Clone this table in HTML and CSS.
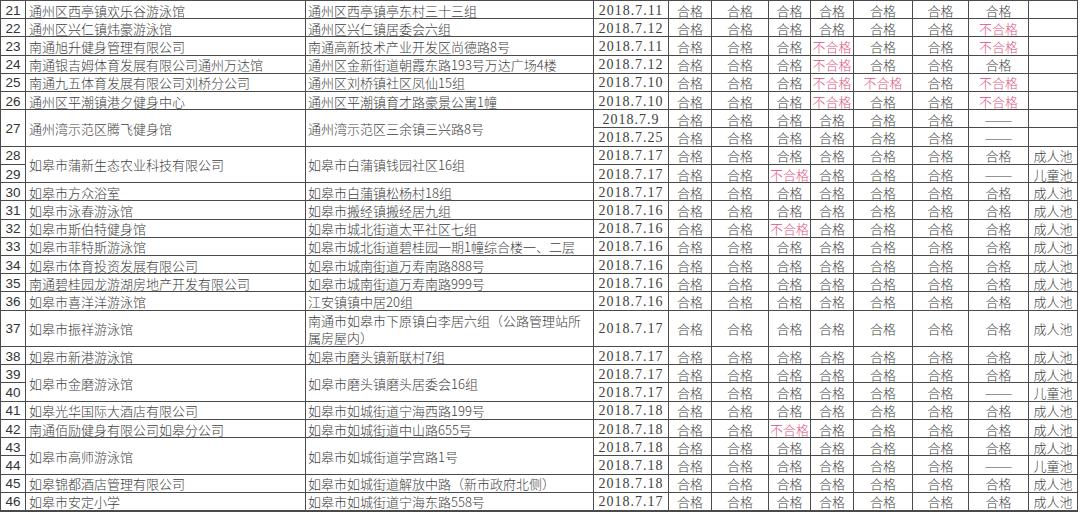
FILE: index.html
```html
<!DOCTYPE html>
<html lang="zh-CN">
<head>
<meta charset="utf-8">
<title>游泳场所检测结果</title>
<link rel="stylesheet" href="styles.css">
</head>
<body>
<div class="sheet">
  <!-- 21 -->
  <div class="c n">21</div><div class="c l">通州区西亭镇欢乐谷游泳馆</div><div class="c a">通州区西亭镇亭东村三十三组</div><div class="c d">2018.7.11</div>
  <div class="c">合格</div><div class="c">合格</div><div class="c">合格</div><div class="c">合格</div><div class="c">合格</div><div class="c">合格</div><div class="c">合格</div><div class="c"></div>
  <!-- 22 -->
  <div class="c n">22</div><div class="c l">通州区兴仁镇炜豪游泳馆</div><div class="c a">通州区兴仁镇居委会六组</div><div class="c d">2018.7.12</div>
  <div class="c">合格</div><div class="c">合格</div><div class="c">合格</div><div class="c">合格</div><div class="c">合格</div><div class="c">合格</div><div class="c bad">不合格</div><div class="c"></div>
  <!-- 23 -->
  <div class="c n">23</div><div class="c l">南通旭升健身管理有限公司</div><div class="c a">南通高新技术产业开发区尚德路8号</div><div class="c d">2018.7.11</div>
  <div class="c">合格</div><div class="c">合格</div><div class="c">合格</div><div class="c bad">不合格</div><div class="c">合格</div><div class="c">合格</div><div class="c bad">不合格</div><div class="c"></div>
  <!-- 24 -->
  <div class="c n">24</div><div class="c l">南通银吉姆体育发展有限公司通州万达馆</div><div class="c a">通州区金新街道朝霞东路193号万达广场4楼</div><div class="c d">2018.7.12</div>
  <div class="c">合格</div><div class="c">合格</div><div class="c">合格</div><div class="c bad">不合格</div><div class="c">合格</div><div class="c">合格</div><div class="c">合格</div><div class="c"></div>
  <!-- 25 -->
  <div class="c n">25</div><div class="c l">南通九五体育发展有限公司刘桥分公司</div><div class="c a">通州区刘桥镇社区凤仙15组</div><div class="c d">2018.7.10</div>
  <div class="c">合格</div><div class="c">合格</div><div class="c">合格</div><div class="c bad">不合格</div><div class="c bad">不合格</div><div class="c">合格</div><div class="c bad">不合格</div><div class="c"></div>
  <!-- 26 -->
  <div class="c n">26</div><div class="c l">通州区平潮镇港夕健身中心</div><div class="c a">通州区平潮镇育才路豪景公寓1幢</div><div class="c d">2018.7.10</div>
  <div class="c">合格</div><div class="c">合格</div><div class="c">合格</div><div class="c bad">不合格</div><div class="c">合格</div><div class="c">合格</div><div class="c bad">不合格</div><div class="c"></div>
  <!-- 27 -->
  <div class="c n r2">27</div><div class="c l r2">通州湾示范区腾飞健身馆</div><div class="c a r2">通州湾示范区三余镇三兴路8号</div><div class="c d">2018.7.9</div>
  <div class="c">合格</div><div class="c">合格</div><div class="c">合格</div><div class="c">合格</div><div class="c">合格</div><div class="c">合格</div><div class="c dash">——</div><div class="c"></div>
  <div class="c d">2018.7.25</div>
  <div class="c">合格</div><div class="c">合格</div><div class="c">合格</div><div class="c">合格</div><div class="c">合格</div><div class="c">合格</div><div class="c dash">——</div><div class="c"></div>
  <!-- 28 / 29 -->
  <div class="c n">28</div><div class="c l r2">如皋市蒲新生态农业科技有限公司</div><div class="c a r2">如皋市白蒲镇钱园社区16组</div><div class="c d">2018.7.17</div>
  <div class="c">合格</div><div class="c">合格</div><div class="c">合格</div><div class="c">合格</div><div class="c">合格</div><div class="c">合格</div><div class="c">合格</div><div class="c">成人池</div>
  <div class="c n">29</div><div class="c d">2018.7.17</div>
  <div class="c">合格</div><div class="c">合格</div><div class="c bad">不合格</div><div class="c">合格</div><div class="c">合格</div><div class="c">合格</div><div class="c dash">——</div><div class="c">儿童池</div>
  <!-- 30 -->
  <div class="c n">30</div><div class="c l">如皋市方众浴室</div><div class="c a">如皋市白蒲镇松杨村18组</div><div class="c d">2018.7.17</div>
  <div class="c">合格</div><div class="c">合格</div><div class="c">合格</div><div class="c">合格</div><div class="c">合格</div><div class="c">合格</div><div class="c">合格</div><div class="c">成人池</div>
  <!-- 31 -->
  <div class="c n">31</div><div class="c l">如皋市泳春游泳馆</div><div class="c a">如皋市搬经镇搬经居九组</div><div class="c d">2018.7.16</div>
  <div class="c">合格</div><div class="c">合格</div><div class="c">合格</div><div class="c">合格</div><div class="c">合格</div><div class="c">合格</div><div class="c">合格</div><div class="c">成人池</div>
  <!-- 32 -->
  <div class="c n">32</div><div class="c l">如皋市斯伯特健身馆</div><div class="c a">如皋市城北街道太平社区七组</div><div class="c d">2018.7.16</div>
  <div class="c">合格</div><div class="c">合格</div><div class="c bad">不合格</div><div class="c">合格</div><div class="c">合格</div><div class="c">合格</div><div class="c">合格</div><div class="c">成人池</div>
  <!-- 33 -->
  <div class="c n">33</div><div class="c l">如皋市菲特斯游泳馆</div><div class="c a">如皋市城北街道碧桂园一期1幢综合楼一、二层</div><div class="c d">2018.7.16</div>
  <div class="c">合格</div><div class="c">合格</div><div class="c">合格</div><div class="c">合格</div><div class="c">合格</div><div class="c">合格</div><div class="c">合格</div><div class="c">成人池</div>
  <!-- 34 -->
  <div class="c n">34</div><div class="c l">如皋市体育投资发展有限公司</div><div class="c a">如皋市城南街道万寿南路888号</div><div class="c d">2018.7.16</div>
  <div class="c">合格</div><div class="c">合格</div><div class="c">合格</div><div class="c">合格</div><div class="c">合格</div><div class="c">合格</div><div class="c">合格</div><div class="c">成人池</div>
  <!-- 35 -->
  <div class="c n">35</div><div class="c l">南通碧桂园龙游湖房地产开发有限公司</div><div class="c a">如皋市城南街道万寿南路999号</div><div class="c d">2018.7.16</div>
  <div class="c">合格</div><div class="c">合格</div><div class="c">合格</div><div class="c">合格</div><div class="c">合格</div><div class="c">合格</div><div class="c">合格</div><div class="c">成人池</div>
  <!-- 36 -->
  <div class="c n">36</div><div class="c l">如皋市喜洋洋游泳馆</div><div class="c a">江安镇镇中居20组</div><div class="c d">2018.7.16</div>
  <div class="c">合格</div><div class="c">合格</div><div class="c">合格</div><div class="c">合格</div><div class="c">合格</div><div class="c">合格</div><div class="c">合格</div><div class="c">成人池</div>
  <!-- 37 -->
  <div class="c n r2">37</div><div class="c l r2">如皋市振祥游泳馆</div><div class="c a r2 wrap">南通市如皋市下原镇白李居六组（公路管理站所属房屋内）</div><div class="c d r2">2018.7.17</div>
  <div class="c r2">合格</div><div class="c r2">合格</div><div class="c r2">合格</div><div class="c r2">合格</div><div class="c r2">合格</div><div class="c r2">合格</div><div class="c r2">合格</div><div class="c r2">成人池</div>
  <!-- 38 -->
  <div class="c n">38</div><div class="c l">如皋市新港游泳馆</div><div class="c a">如皋市磨头镇新联村7组</div><div class="c d">2018.7.17</div>
  <div class="c">合格</div><div class="c">合格</div><div class="c">合格</div><div class="c">合格</div><div class="c">合格</div><div class="c">合格</div><div class="c">合格</div><div class="c">成人池</div>
  <!-- 39 / 40 -->
  <div class="c n">39</div><div class="c l r2">如皋市金磨游泳馆</div><div class="c a r2">如皋市磨头镇磨头居委会16组</div><div class="c d">2018.7.17</div>
  <div class="c">合格</div><div class="c">合格</div><div class="c">合格</div><div class="c">合格</div><div class="c">合格</div><div class="c">合格</div><div class="c">合格</div><div class="c">成人池</div>
  <div class="c n">40</div><div class="c d">2018.7.17</div>
  <div class="c">合格</div><div class="c">合格</div><div class="c">合格</div><div class="c">合格</div><div class="c">合格</div><div class="c">合格</div><div class="c dash">——</div><div class="c">儿童池</div>
  <!-- 41 -->
  <div class="c n">41</div><div class="c l">如皋光华国际大酒店有限公司</div><div class="c a">如皋市如城街道宁海西路199号</div><div class="c d">2018.7.18</div>
  <div class="c">合格</div><div class="c">合格</div><div class="c">合格</div><div class="c">合格</div><div class="c">合格</div><div class="c">合格</div><div class="c">合格</div><div class="c">成人池</div>
  <!-- 42 -->
  <div class="c n">42</div><div class="c l">南通佰励健身有限公司如皋分公司</div><div class="c a">如皋市如城街道中山路655号</div><div class="c d">2018.7.18</div>
  <div class="c">合格</div><div class="c">合格</div><div class="c bad">不合格</div><div class="c">合格</div><div class="c">合格</div><div class="c">合格</div><div class="c">合格</div><div class="c">成人池</div>
  <!-- 43 / 44 -->
  <div class="c n">43</div><div class="c l r2">如皋市高师游泳馆</div><div class="c a r2">如皋市如城街道学宫路1号</div><div class="c d">2018.7.18</div>
  <div class="c">合格</div><div class="c">合格</div><div class="c">合格</div><div class="c">合格</div><div class="c">合格</div><div class="c">合格</div><div class="c">合格</div><div class="c">成人池</div>
  <div class="c n">44</div><div class="c d">2018.7.18</div>
  <div class="c">合格</div><div class="c">合格</div><div class="c">合格</div><div class="c">合格</div><div class="c">合格</div><div class="c">合格</div><div class="c dash">——</div><div class="c">儿童池</div>
  <!-- 45 -->
  <div class="c n">45</div><div class="c l">如皋锦都酒店管理有限公司</div><div class="c a">如皋市如城街道解放中路（新市政府北侧）</div><div class="c d">2018.7.18</div>
  <div class="c">合格</div><div class="c">合格</div><div class="c">合格</div><div class="c">合格</div><div class="c">合格</div><div class="c">合格</div><div class="c">合格</div><div class="c">成人池</div>
  <!-- 46 -->
  <div class="c n">46</div><div class="c l">如皋市安定小学</div><div class="c a">如皋市如城街道宁海东路558号</div><div class="c d">2018.7.17</div>
  <div class="c">合格</div><div class="c">合格</div><div class="c">合格</div><div class="c">合格</div><div class="c">合格</div><div class="c">合格</div><div class="c">合格</div><div class="c">成人池</div>
</div>
</body>
</html>
```

FILE: styles.css
```css
html, body {
  margin: 0;
  padding: 0;
  background: #ffffff;
}

.sheet {
  box-sizing: border-box;
  width: 1078px;
  height: 512px;
  padding: 1px 1px 2px 1px;
  background: #4a4a4a;
  display: grid;
  grid-template-columns: 24px 279px 287px 74px 42px 56px 41px 42px 58px 55px 59px 48px;
  grid-template-rows: repeat(28, 1fr);
  gap: 1px;
  font-family: "Noto Sans CJK SC", "Noto Sans", sans-serif;
  font-size: 13px;
  font-weight: 300;
  color: #404040;
}

.c {
  background: #ffffff;
  display: flex;
  align-items: center;
  justify-content: center;
  white-space: nowrap;
  overflow: hidden;
  line-height: 17px;
  padding-top: 1px;
}

.r2 {
  grid-row: span 2;
}

.n {
  font-family: "Liberation Sans", Arial, sans-serif;
  font-size: 13.5px;
  font-weight: 400;
  color: #333333;
}

.l {
  justify-content: flex-start;
  padding-left: 3px;
}

.a {
  justify-content: flex-start;
  padding-left: 2px;
}

.wrap {
  white-space: normal;
  line-height: 17px;
}

.d {
  font-family: "Liberation Serif", "Times New Roman", serif;
  font-size: 14px;
  font-weight: 400;
  letter-spacing: 1px;
}

.dash {
  font-family: "Liberation Serif", "Times New Roman", serif;
  font-weight: 400;
  letter-spacing: 0;
}

.bad {
  color: #e2507a;
}
```
